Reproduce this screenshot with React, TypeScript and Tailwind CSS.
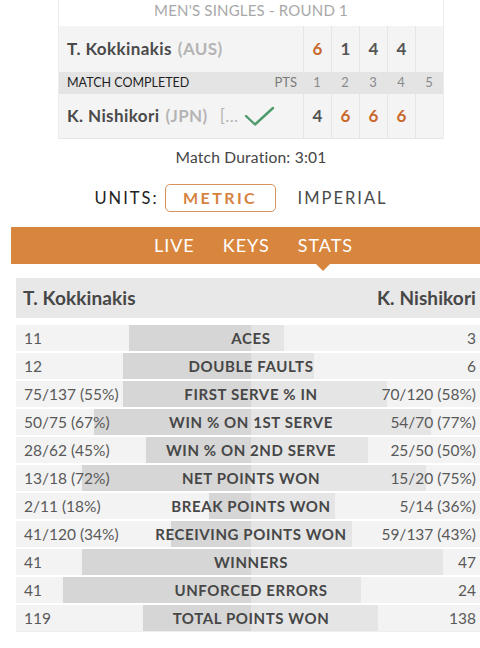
import type React from "react";

type Stat = {
  label: string;
  left: string;
  right: string;
  lw: number; // left bar width in px
  rw: number; // right bar width in px
};

const stats: Stat[] = [
  { label: "Aces", left: "11", right: "3", lw: 122, rw: 33 },
  { label: "Double Faults", left: "12", right: "6", lw: 128, rw: 63 },
  { label: "First Serve % In", left: "75/137 (55%)", right: "70/120 (58%)", lw: 128, rw: 136 },
  { label: "Win % on 1st Serve", left: "50/75 (67%)", right: "54/70 (77%)", lw: 157, rw: 180 },
  { label: "Win % on 2nd Serve", left: "28/62 (45%)", right: "25/50 (50%)", lw: 105, rw: 117 },
  { label: "Net Points Won", left: "13/18 (72%)", right: "15/20 (75%)", lw: 169, rw: 175 },
  { label: "Break Points Won", left: "2/11 (18%)", right: "5/14 (36%)", lw: 42, rw: 84 },
  { label: "Receiving Points Won", left: "41/120 (34%)", right: "59/137 (43%)", lw: 80, rw: 101 },
  { label: "Winners", left: "41", right: "47", lw: 169, rw: 192 },
  { label: "Unforced Errors", left: "41", right: "24", lw: 188, rw: 110 },
  { label: "Total Points Won", left: "119", right: "138", lw: 108, rw: 127 },
];

const ScoreCell: React.FC<{ value?: string; win?: boolean }> = ({ value, win }) => (
  <div
    className={`w-[28px] border-l border-[#e6e6e6] flex items-center justify-center text-[17px] font-bold ${
      win ? "text-[#c9682c]" : "text-[#555]"
    }`}
  >
    {value}
  </div>
);

const Scoreboard: React.FC = () => (
  <div className="ml-[58px] w-[386px] border-x border-[#ececec]">
    <div className="h-[26px] bg-white flex items-start justify-center text-[15px] leading-[20px] text-[#a8a8a8] tracking-[0.2px]">
      MEN'S SINGLES - ROUND 1
    </div>
    <div className="h-[46px] flex bg-[#f4f4f4]">
      <div className="flex-1 flex items-center pl-[8px] text-[17px] font-bold text-[#4a4a4a] tracking-[0.4px]">
        T. Kokkinakis
        <span className="ml-[6px] text-[#b4b4b4]">(AUS)</span>
      </div>
      <ScoreCell value="6" win />
      <ScoreCell value="1" />
      <ScoreCell value="4" />
      <ScoreCell value="4" />
      <ScoreCell />
    </div>
    <div className="h-[22px] flex bg-[#e4e4e4] text-[12.5px]">
      <div className="flex-1 flex items-center justify-between pl-[8px] pr-[6px]">
        <span className="text-[#1e1e1e]">MATCH COMPLETED</span>
        <span className="text-[13px] text-[#7a7a7a]">PTS</span>
      </div>
      {["1", "2", "3", "4", "5"].map((n) => (
        <div key={n} className="w-[28px] flex items-center justify-center text-[13px] text-[#8a8a8a]">
          {n}
        </div>
      ))}
    </div>
    <div className="h-[45px] flex bg-[#f4f4f4] border-b border-[#e6e6e6]">
      <div className="flex-1 flex items-center pl-[8px] text-[17px] font-bold text-[#4a4a4a] tracking-[0.4px]">
        K. Nishikori
        <span className="ml-[6px] text-[#b4b4b4]">(JPN)</span>
        <span className="ml-[12px] font-normal text-[#b4b4b4]">[...</span>
        <svg className="ml-[6px]" width="31" height="22" viewBox="0 0 31 22" fill="none">
          <path d="M2 11 L11 19.5 L29 3" stroke="#4e9a6c" strokeWidth="2.4" strokeLinecap="round" strokeLinejoin="round" />
        </svg>
      </div>
      <ScoreCell value="4" />
      <ScoreCell value="6" win />
      <ScoreCell value="6" win />
      <ScoreCell value="6" win />
      <ScoreCell />
    </div>
  </div>
);

const App: React.FC = () => {
  return (
    <div className="w-[480px] h-[648px] bg-white overflow-hidden font-['Lato','Open_Sans',sans-serif]">
      <Scoreboard />

      <div className="mt-[7px] ml-[22px] text-center text-[15.6px] tracking-[0.2px] text-[#454545]">Match Duration: 3:01</div>

      <div className="mt-[15px] ml-[2px] flex items-center justify-center">
        <span className="text-[16.5px] tracking-[2px] text-[#222] mr-[6px]">UNITS:</span>
        <div className="w-[111px] h-[28px] border border-[#d9925a] rounded-[5px] flex items-center justify-center text-[16px] font-bold tracking-[2.4px] text-[#d5833f]">
          METRIC
        </div>
        <span className="ml-[22px] text-[16.5px] tracking-[2px] text-[#4a4a4a]">IMPERIAL</span>
      </div>

      <div className="mt-[15px] ml-[11px] h-[37px] bg-[#d8863e] flex items-center justify-center gap-[28px] pl-[16px] text-[18px] text-white tracking-[1px] relative">
        <span>LIVE</span>
        <span>KEYS</span>
        <span>STATS</span>
        <div className="absolute left-[305px] top-[37px] w-0 h-0 border-l-[7px] border-r-[7px] border-t-[7px] border-l-transparent border-r-transparent border-t-[#d8863e]" />
      </div>

      <div className="mt-[14px] ml-[16px]">
        <div className="h-[40px] bg-[#e8e8e8] flex items-center justify-between pl-[7px] pr-[4px] text-[19px] font-bold text-[#474747] tracking-[0.1px]">
          <span>T. Kokkinakis</span>
          <span>K. Nishikori</span>
        </div>
        <div className="mt-[7px] flex flex-col gap-[2px] border-b border-[#eeeeee]">
          {stats.map((s) => (
            <div key={s.label} className="relative h-[26px] bg-[#f3f3f3] flex items-center justify-between pl-[8px] pr-[4px] text-[15.5px] text-[#595959]">
              <div className="absolute inset-y-0 bg-[#d6d6d6]" style={{ left: 235 - s.lw, width: s.lw }} />
              <div className="absolute inset-y-0 left-[235px] bg-[#e5e5e5]" style={{ width: s.rw }} />
              <span className="relative">{s.left}</span>
              <span className="absolute left-[235px] -translate-x-1/2 whitespace-nowrap text-[15px] font-bold uppercase text-[#474747] tracking-[0.6px]">
                {s.label}
              </span>
              <span className="relative">{s.right}</span>
            </div>
          ))}
        </div>
      </div>
    </div>
  );
};

export default App;
